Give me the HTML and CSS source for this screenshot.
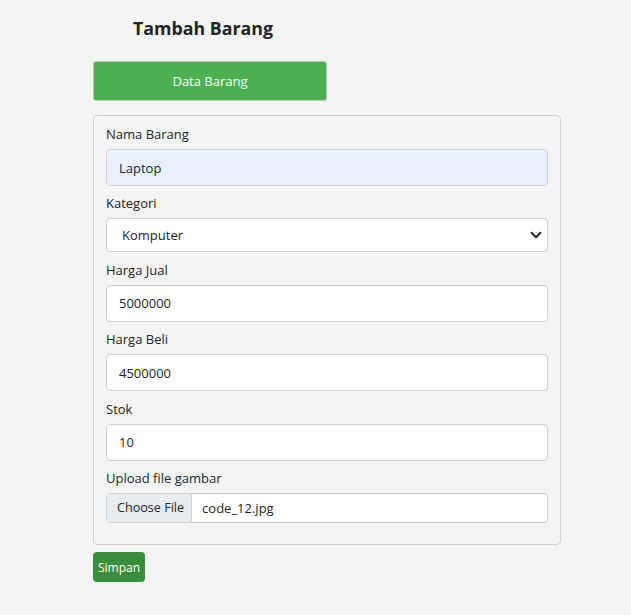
FILE: index.html
```html
<!DOCTYPE html>
<html lang="en">
<head>
    <meta charset="UTF-8">
    <meta name="viewport" content="width=device-width, initial-scale=1.0">
    <title>Tambah Barang</title>
    <link rel="stylesheet" href="styles.css">
</head>
<body>
    <div class="container">
        <h2>Tambah Barang</h2>
        <a class="btn-data" href="#">Data Barang</a>

        <form class="panel">
            <div class="group">
                <label class="caption" for="nama">Nama Barang</label>
                <input type="text" id="nama" class="autofill" value="Laptop"/>
            </div>
            <div class="group">
                <label class="caption" for="kategori">Kategori</label>
                <div class="select-wrap">
                    <select id="kategori">
                        <option>Komputer</option>
                        <option>Elektronik</option>
                    </select>
                    <svg class="chevron" width="12" height="12" viewBox="0 0 16 16">
                        <path d="M2 5l6 6 6-6" fill="none" stroke="#222" stroke-width="2.6" stroke-linecap="round" stroke-linejoin="round"/>
                    </svg>
                </div>
            </div>
            <div class="group">
                <label class="caption" for="jual">Harga Jual</label>
                <input type="number" id="jual" value="5000000"/>
            </div>
            <div class="group">
                <label class="caption" for="beli">Harga Beli</label>
                <input type="number" id="beli" value="4500000"/>
            </div>
            <div class="group">
                <label class="caption" for="stok">Stok</label>
                <input type="number" id="stok" value="10"/>
            </div>
            <div class="group">
                <label class="caption" for="gambar">Upload file gambar</label>
                <label class="file" for="gambar">
                    <span class="file-btn">Choose File</span>
                    <span class="file-name">code_12.jpg</span>
                    <input type="file" id="gambar"/>
                </label>
            </div>
        </form>

        <button class="btn-save">Simpan</button>
    </div>
</body>
</html>
```

FILE: styles.css
```css
body {
    margin: 0;
    background-color: #f4f4f4;
    font-family: "Open Sans", Arial, sans-serif;
    font-size: 13px;
    color: #212529;
}

.container {
    width: 468px;
    margin-left: 93px;
}

h2 {
    font-size: 17.8px;
    font-weight: bold;
    line-height: 26px;
    margin: 15px 0 20px 40px;
}

.btn-data {
    display: block;
    width: 234px;
    height: 40px;
    line-height: 39px;
    box-sizing: border-box;
    text-align: center;
    color: white;
    text-decoration: none;
    background-color: #4caf50;
    border: 1px solid #b9c9b4;
    border-radius: 3px;
}

.panel {
    margin-top: 14px;
    padding: 8px 12px 14px;
    border: 1px solid #cfcfcf;
    border-radius: 4px;
}

.group {
    margin-bottom: 7.4px;
}

.caption {
    display: block;
    line-height: 20px;
    margin-bottom: 5px;
}

input[type="text"],
input[type="number"],
select {
    display: block;
    width: 100%;
    box-sizing: border-box;
    height: 37px;
    padding: 0 12px;
    border: 1px solid #cdd1d5;
    border-radius: 4px;
    background-color: white;
    font-family: inherit;
    font-size: 13px;
    color: #212529;
    outline: none;
}

input[type="number"] {
    -moz-appearance: textfield;
}

input::-webkit-inner-spin-button {
    -webkit-appearance: none;
}

.autofill {
    background-color: #e8f0fe !important;
}

.select-wrap {
    position: relative;
}

select {
    height: 34px;
    padding-left: 15px;
    -webkit-appearance: none;
    appearance: none;
}

.chevron {
    position: absolute;
    right: 6px;
    top: 11px;
    pointer-events: none;
}

.file {
    display: flex;
    height: 30px;
    box-sizing: border-box;
    border: 1px solid #cdd1d5;
    border-radius: 4px;
    background-color: white;
    overflow: hidden;
    cursor: pointer;
}

.file input {
    display: none;
}

.file-btn {
    display: flex;
    align-items: center;
    padding: 0 7px 0 10px;
    background-color: #e9ecef;
    border-right: 1px solid #cdd1d5;
    font-size: 12.6px;
}

.file-name {
    display: flex;
    align-items: center;
    padding-left: 10px;
}

.btn-save {
    margin-top: 7px;
    height: 30px;
    padding: 0 5px;
    border: none;
    border-radius: 4px;
    background-color: #388e3c;
    color: white;
    font-family: inherit;
    font-size: 12px;
    cursor: pointer;
}
```
